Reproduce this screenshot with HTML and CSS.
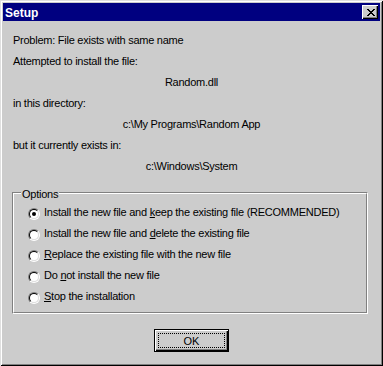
FILE: index.html
```html
<!DOCTYPE html>
<html lang="en">
<head>
  <meta charset="UTF-8">
  <meta name="viewport" content="width=device-width, initial-scale=1.0">
  <title>Setup</title>
  <link rel="stylesheet" href="styles.css">
</head>
<body>
  <div class="window">
    <div class="titlebar">
      <span class="title">Setup</span>
      <button class="close" type="button">
        <svg width="8" height="7" viewBox="0 0 8 7" shape-rendering="crispEdges">
          <path d="M0 0h2v1h-2zM6 0h2v1h-2zM1 1h2v1h-2zM5 1h2v1h-2zM2 2h4v1h-4zM3 3h2v1h-2zM2 4h4v1h-4zM1 5h2v1h-2zM5 5h2v1h-2zM0 6h2v1h-2zM6 6h2v1h-2z" fill="#000"/>
        </svg>
      </button>
    </div>

    <div class="content">
      <p class="line">Problem: File exists with same name</p>
      <p class="line">Attempted to install the file:</p>
      <p class="line center">Random.dll</p>
      <p class="line">in this directory:</p>
      <p class="line center">c:\My Programs\Random App</p>
      <p class="line">but it currently exists in:</p>
      <p class="line center">c:\Windows\System</p>

      <div class="group">
        <span class="legend">Options</span>
        <div class="group-inner">
          <label class="option"><span class="radio checked"></span><span>Install the new file and <u>k</u>eep the existing file (RECOMMENDED)</span></label>
          <label class="option"><span class="radio"></span><span>Install the new file and <u>d</u>elete the existing file</span></label>
          <label class="option"><span class="radio"></span><span><u>R</u>eplace the existing file with the new file</span></label>
          <label class="option"><span class="radio"></span><span>Do <u>n</u>ot install the new file</span></label>
          <label class="option"><span class="radio"></span><span><u>S</u>top the installation</span></label>
        </div>
      </div>

      <div class="actions">
        <button class="ok" type="button"><span class="focus">OK</span></button>
      </div>
    </div>
  </div>
</body>
</html>
```

FILE: styles.css
```css
body {
  margin: 0;
  font-family: "Liberation Sans", Arial, sans-serif;
  font-size: 11px;
  letter-spacing: -0.25px;
  color: #000;
  background-color: #cccccc;
}
.window {
  width: 383px;
  height: 366px;
  box-sizing: border-box;
  padding: 3px;
  background-color: #cccccc;
  box-shadow: inset 1px 1px #dfdfdf, inset -1px -1px #000, inset 2px 2px #fff, inset -2px -2px #808080;
}
.titlebar {
  height: 18px;
  background-color: #000080;
  display: flex;
  align-items: center;
  justify-content: space-between;
  padding: 0 2px 0 2px;
}
.title {
  color: #fff;
  font-weight: bold;
  font-size: 12px;
  letter-spacing: 0;
  line-height: 18px;
  padding-top: 1px;
}
.close {
  width: 16px;
  height: 14px;
  padding: 4px 0 0 5px;
  margin: 0;
  border: none;
  background-color: #cccccc;
  box-shadow: inset 1px 1px #fff, inset -1px -1px #000, inset -2px -2px #808080;
  display: flex;
  align-items: flex-start;
  box-sizing: border-box;
}
.close svg {
  display: block;
}
.content {
  padding-top: 9px;
}
.line {
  margin: 0;
  padding: 0 10px;
  line-height: 21px;
  white-space: nowrap;
}
.center {
  text-align: center;
}
.group {
  position: relative;
  margin: 15px 12px 0 9px;
  height: 122px;
  box-sizing: border-box;
  border: 1px solid;
  border-color: #808080 #fff #fff #808080;
}
.group-inner {
  height: 100%;
  box-sizing: border-box;
  border: 1px solid;
  border-color: #fff #808080 #808080 #fff;
  padding: 8px 0 0 14px;
}
.legend {
  position: absolute;
  left: 8px;
  top: -5px;
  padding: 0 1px;
  line-height: 13px;
  background-color: #cccccc;
}
.option {
  display: flex;
  align-items: flex-start;
  line-height: 21px;
  white-space: nowrap;
}
.option u {
  text-decoration-thickness: 1px;
  text-underline-offset: 1px;
}
.radio {
  position: relative;
  width: 12px;
  height: 12px;
  margin: 6px 4px 0 0;
  box-sizing: border-box;
  border-radius: 50%;
  border: 1px solid;
  border-color: #808080 #fff #fff #808080;
  flex-shrink: 0;
}
.radio::before {
  content: "";
  position: absolute;
  inset: 0;
  border-radius: 50%;
  border: 1px solid;
  border-color: #000 #dfdfdf #dfdfdf #000;
  background-color: #fff;
}
.radio.checked::after {
  content: "";
  position: absolute;
  left: 3px;
  top: 3px;
  width: 4px;
  height: 4px;
  border-radius: 50%;
  background-color: #000;
}
.actions {
  display: flex;
  justify-content: center;
  margin-top: 15px;
}
.ok {
  width: 75px;
  height: 23px;
  padding: 3px;
  margin: 0;
  box-sizing: border-box;
  border: 1px solid #000;
  background-color: #cccccc;
  box-shadow: inset 1px 1px #fff, inset -1px -1px #000, inset -2px -2px #808080;
  font-family: "Liberation Sans", Arial, sans-serif;
  font-size: 11px;
  color: #000;
}
.focus {
  display: flex;
  align-items: center;
  justify-content: center;
  height: 100%;
  border: 1px dotted #000;
  box-sizing: border-box;
}
```
